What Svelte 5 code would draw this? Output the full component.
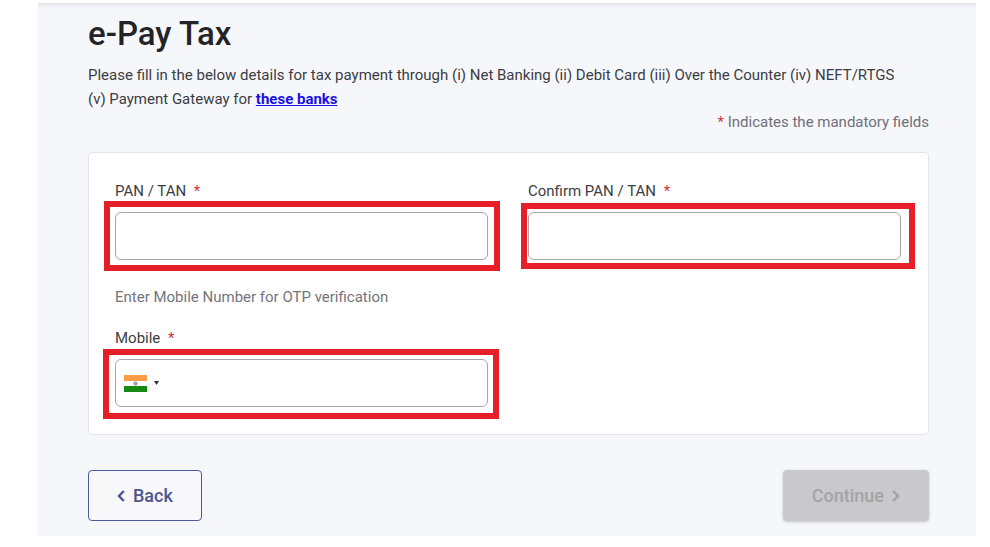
<script lang="ts">
    let pan = ''
    let confirmPan = ''
    let mobile = ''
</script>

<main class="page">
    <h1>e-Pay Tax</h1>
    <p class="intro">
        Please fill in the below details for tax payment through (i) Net Banking (ii) Debit Card (iii) Over the Counter (iv) NEFT/RTGS<br />
        (v) Payment Gateway for <a href="#banks">these banks</a>
    </p>
    <p class="mandatory"><span class="star">*</span> Indicates the mandatory fields</p>

    <form id="tax-form" class="card">
        <div class="field">
            <label for="pan">PAN / TAN <span class="star">*</span></label>
            <div class="control mark-pan">
                <input id="pan" type="text" bind:value={pan} />
            </div>
        </div>
        <div class="field">
            <label for="confirm-pan">Confirm PAN / TAN <span class="star">*</span></label>
            <div class="control mark-confirm">
                <input id="confirm-pan" type="text" bind:value={confirmPan} />
            </div>
        </div>

        <p class="hint">Enter Mobile Number for OTP verification</p>

        <div class="field">
            <label for="mobile">Mobile <span class="star">*</span></label>
            <div class="control mark-mobile">
                <button type="button" class="country" aria-label="India">
                    <svg width="23" height="17" viewBox="0 0 23 17">
                        <rect width="23" height="17" fill="#fff" />
                        <rect width="23" height="6" fill="#fb9d48" />
                        <rect y="11" width="23" height="6" fill="#158a12" />
                        <circle cx="11.5" cy="8.5" r="1.8" fill="#a3a7cc" stroke="#8488b5" stroke-width="0.7" />
                    </svg>
                    <svg width="5" height="4" viewBox="0 0 5 4">
                        <path d="M0 0h5L2.5 4z" fill="#333" />
                    </svg>
                </button>
                <input id="mobile" type="tel" bind:value={mobile} />
            </div>
        </div>
    </form>

    <div class="actions">
        <button type="button" class="back">
            <svg width="8" height="12" viewBox="0 0 8 12">
                <path d="M6.8 1L2 6l4.800 5" fill="none" stroke="currentColor" stroke-width="2.4" />
            </svg>
            Back
        </button>
        <button type="submit" form="tax-form" class="continue" disabled>
            Continue
            <svg width="8" height="12" viewBox="0 0 8 12">
                <path d="M1.200 1L6 6l-4.800 5" fill="none" stroke="currentColor" stroke-width="2.4" />
            </svg>
        </button>
    </div>
</main>

<style>
    :global(body) {
        background: #fff;
    }

    .page {
        margin: 3px 14px 11px 38px;
        padding: 7px 47px 15px 50px;
        background: #f6f7fb;
        box-shadow: inset 0 5px 5px -4px #d4d4dc;
        font-family: Roboto, 'Liberation Sans', sans-serif;
        font-size: 15px;
        line-height: 24px;
        color: #3c3d44;
    }

    h1 {
        margin: 0 0 5px;
        font-size: 33px;
        font-weight: 500;
        line-height: 48px;
        color: #242427;
    }

    p {
        margin: 0;
    }

    .intro a {
        font-weight: 700;
        color: #1a12e0;
    }

    .mandatory {
        line-height: 22px;
        text-align: right;
        color: #6f7078;
    }

    .star {
        color: #c8383f;
    }

    label .star {
        margin-left: 4px;
    }

    .card {
        display: grid;
        grid-template-columns: 1fr 1fr;
        column-gap: 40px;
        margin-top: 19px;
        padding: 26px 27px 27px 26px;
        border: 1px solid #e3e4ea;
        border-radius: 4px;
        background: #fff;
    }

    label {
        display: block;
        margin-bottom: 9px;
    }

    .control {
        position: relative;
        display: flex;
        box-sizing: border-box;
        height: 48px;
        border: 1px solid #a6a6a9;
        border-radius: 6px;
    }

    /* red highlight around each required box */
    .control::after {
        content: '';
        position: absolute;
        border: 6px solid #e61e28;
        pointer-events: none;
    }

    .mark-pan::after {
        inset: -12px -13px -12px -12px;
    }

    .mark-confirm::after {
        inset: -10px -15px -10px -8px;
    }

    .mark-mobile::after {
        inset: -11px -12px -13px -13px;
    }

    input {
        flex: 1;
        min-width: 0;
        padding: 0 12px;
        border: 0;
        outline: 0;
        background: none;
        font: inherit;
        color: inherit;
    }

    .country {
        display: flex;
        align-items: center;
        gap: 7px;
        padding: 0 8px;
        border: 0;
        background: none;
        cursor: pointer;
    }

    .hint {
        grid-column: 1 / -1;
        margin: 25px 0 17px;
        color: #74757b;
    }

    .actions {
        display: flex;
        justify-content: space-between;
        margin-top: 35px;
    }

    .actions button {
        display: flex;
        align-items: center;
        gap: 8px;
        height: 51px;
        padding: 0 28px;
        border: 1px solid #c9c9cc;
        border-radius: 4px;
        font-family: inherit;
        font-size: 18px;
        font-weight: 500;
    }

    .actions .back {
        border-color: #4f599c;
        background: #f8f8fa;
        color: #4c5690;
        cursor: pointer;
    }

    .actions .continue {
        background: #c9c9cc;
        color: #a3a3a6;
        box-shadow: 0 1px 3px #c4c4ca;
    }
</style>
